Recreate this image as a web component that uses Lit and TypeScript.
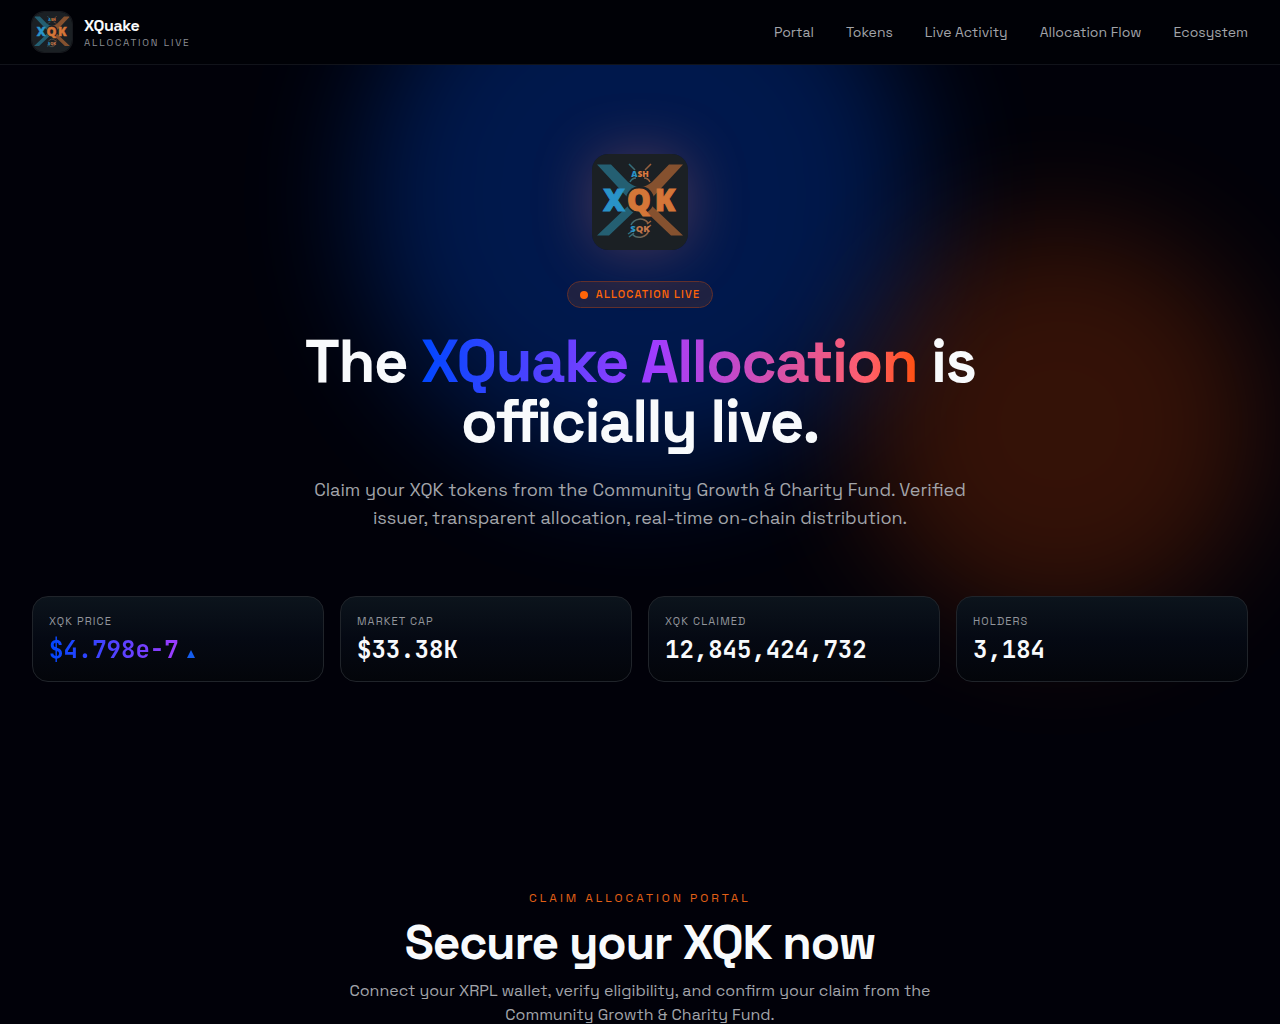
import { LitElement, html, svg, css } from "lit";
import { customElement } from "lit/decorators.js";

const links = ["Portal", "Tokens", "Live Activity", "Allocation Flow", "Ecosystem"];

const stats = [
  { label: "XQK Price", value: "$4.798e-7", rising: true },
  { label: "Market Cap", value: "$33.38K", rising: false },
  { label: "XQK Claimed", value: "12,845,424,732", rising: false },
  { label: "Holders", value: "3,184", rising: false },
];

@customElement("xqk-mark")
class XqkMark extends LitElement {
  static styles = css`
    :host { display: block; overflow: hidden; }
    .art { display: block; width: 100%; height: 100%; }
    .word { font-family: "Open Sans", Inter, sans-serif; font-weight: 800; }
  `;
  render() {
    return html`<svg class="art" viewBox="0 0 96 96" role="img" aria-label="XQuake">
      ${svg`
      <defs>
        <linearGradient id="ring" x1="0" x2="1">
          <stop offset="0" stop-color="#256f83" /><stop offset="1" stop-color="#a75e34" />
        </linearGradient>
      </defs>
      <rect width="96" height="96" fill="#1b2024" />
      <path d="M5 10.500H19L36 28Q42 33 48 33V52L17 81.500H5L36 52Q40 48 36 44Z" fill="#245f72" />
      <path d="M91 10.500H77L60 28Q54 33 48 33V52L79 81.500H91L60 52Q56 48 60 44Z" fill="#85512f" />
      <circle cx="48" cy="46" r="14" fill="#1b2024" />
      <path d="M37 10L43 16M59 10L53 16M38 28Q40 24 44 24M58 28Q56 24 52 24" fill="none" stroke="url(#ring)" stroke-width="1.500" />
      <path d="M39 71A10 10 0 0 1 56 69M40 80A10 10 0 0 0 57 76M36 80L42 76M37 83L42 79M55 70L59 67M55 74L59 71" fill="none" stroke="url(#ring)" stroke-width="1.500" />
      <g class="word" text-anchor="middle">
        <text x="48" y="22.500" font-size="8.500"><tspan fill="#2993c8">A</tspan><tspan fill="#db7a3f">SH</tspan></text>
        <text x="22" y="57" font-size="30" fill="#2993c8" stroke="#2993c8">X</text>
        <text x="47" y="57" font-size="30" fill="#d47638" stroke="#d47638">Q</text>
        <text x="73" y="57" font-size="30" fill="#d47638" stroke="#d47638">K</text>
        <text x="48" y="78" font-size="9.500"><tspan fill="#2993c8">S</tspan><tspan fill="#c4764a">QK</tspan></text>
      </g>`}
    </svg>`;
  }
}

@customElement("app-root")
class AppRoot extends LitElement {
  static styles = css`
    :host {
      display: block;
      position: relative;
      overflow: hidden;
      min-height: 100vh;
      background: #010109;
      color: #f8fafc;
      font-family: "Space Grotesk", Inter, sans-serif;
    }
    .header {
      position: relative;
      z-index: 2;
      display: flex;
      align-items: center;
      justify-content: space-between;
      height: 64px;
      padding: 0 32px;
      background: #000106;
      border-bottom: 1px solid #11131a;
    }
    .brand { display: flex; align-items: center; gap: 12px; color: inherit; text-decoration: none; }
    .brand-mark { width: 40px; height: 40px; border-radius: 12px; box-shadow: 0 0 0 1px #17191e; }
    .brand-text { display: flex; flex-direction: column; padding-top: 2px; }
    .brand-name { font-size: 16px; line-height: 18px; font-weight: 600; letter-spacing: -0.025em; }
    .brand-sub { font-size: 10px; line-height: 15px; letter-spacing: 0.18em; color: #8a8c92; text-transform: uppercase; }
    .nav { display: flex; gap: 32px; }
    .link { font-size: 14px; line-height: 20px; color: #a2a4a9; text-decoration: none; }
    .hero {
      position: relative;
      display: flex;
      flex-direction: column;
      align-items: center;
      padding: 89px 32px 96px;
      text-align: center;
    }
    .glow { position: absolute; border-radius: 50%; pointer-events: none; }
    .glow-blue { width: 560px; height: 560px; top: -150px; left: calc(50% - 280px); background: #0058ff; opacity: .27; filter: blur(60px); }
    .glow-orange { width: 400px; height: 400px; top: 160px; right: 20px; background: #ff5500; opacity: .2; filter: blur(60px); }
    .hero-mark {
      position: relative;
      width: 96px;
      height: 96px;
      border-radius: 16px;
      box-shadow: 0 0 60px rgba(255, 130, 110, .3);
    }
    .badge {
      position: relative;
      display: flex;
      align-items: center;
      gap: 8px;
      margin-top: 31px;
      padding: 5px 12px;
      border: 1px solid #61302c;
      border-radius: 14px;
      background: rgba(255, 106, 0, .12);
      color: #ff6508;
      font-size: 11px;
      line-height: 15px;
      font-weight: 500;
      letter-spacing: 0.1em;
      text-transform: uppercase;
    }
    .dot { width: 8px; height: 8px; border-radius: 50%; background: #ff6508; }
    .title {
      position: relative;
      max-width: 768px;
      margin: 24px 0 0;
      font-size: 60px;
      line-height: 60px;
      font-weight: 700;
      letter-spacing: -0.025em;
    }
    .gradient {
      background: linear-gradient(90deg, #0047ff 0%, #a03cff 47%, #ff5f6b 90%, #ff5010 100%);
      background-clip: text;
      -webkit-background-clip: text;
      color: transparent;
    }
    .lead {
      position: relative;
      max-width: 672px;
      margin: 24px 0 0;
      font-size: 18px;
      line-height: 28px;
      color: #a2a4a9;
    }
    .stats {
      position: relative;
      display: grid;
      grid-template-columns: repeat(4, 1fr);
      gap: 16px;
      align-self: stretch;
      margin: 64px 0 0;
      text-align: left;
    }
    .card {
      padding: 16px;
      border: 1px solid #20242a;
      border-radius: 16px;
      background: linear-gradient(180deg, #0c141c 0%, #050913 50%, #03050a 100%);
    }
    .label { font-size: 11px; line-height: 16px; letter-spacing: 0.1em; color: #92959b; text-transform: uppercase; }
    .value {
      display: flex;
      align-items: baseline;
      gap: 8px;
      margin: 6px 0 0;
      font-family: "JetBrains Mono", "Liberation Mono", monospace;
      font-size: 24px;
      line-height: 30px;
      font-weight: 700;
    }
    .price { background: linear-gradient(90deg, #0047ff, #a03cff); background-clip: text; -webkit-background-clip: text; color: transparent; }
    .up { width: 8px; height: 8px; fill: #155eef; }
    .portal {
      position: relative;
      display: flex;
      flex-direction: column;
      align-items: center;
      padding: 112px 32px 0;
      text-align: center;
    }
    .eyebrow { margin: 0; font-size: 12px; line-height: 16px; letter-spacing: 3px; color: #e26016; text-transform: uppercase; }
    .heading { margin: 13px 0 0; font-size: 48px; line-height: 48px; font-weight: 700; letter-spacing: -0.025em; }
    .copy { max-width: 620px; margin: 12px 0 0; font-size: 16px; line-height: 24px; color: #a2a4a9; }
  `;

  render() {
    return html`
      <header class="header">
        <a class="brand" href="#top">
          <xqk-mark class="brand-mark"></xqk-mark>
          <span class="brand-text">
            <span class="brand-name">XQuake</span>
            <span class="brand-sub">Allocation Live</span>
          </span>
        </a>
        <nav class="nav" aria-label="Main">
          ${links.map((text) => html`<a class="link" href="#${text.toLowerCase().replace(" ", "-")}">${text}</a>`)}
        </nav>
      </header>
      <main>
        <section class="hero" id="top">
          <div class="glow glow-blue"></div>
          <div class="glow glow-orange"></div>
          <xqk-mark class="hero-mark"></xqk-mark>
          <div class="badge"><span class="dot"></span>Allocation Live</div>
          <h1 class="title">The <span class="gradient">XQuake Allocation</span> is<br />officially live.</h1>
          <p class="lead">Claim your XQK tokens from the Community Growth &amp; Charity Fund. Verified<br />issuer, transparent allocation, real-time on-chain distribution.</p>
          <dl class="stats">
            ${stats.map((s) => html`
              <div class="card">
                <dt class="label">${s.label}</dt>
                <dd class="value">
                  <span class=${s.rising ? "price" : ""}>${s.value}</span>
                  ${s.rising ? html`<svg class="up" viewBox="0 0 8 8" aria-hidden="true"><path d="M4 0L8 8H0Z" /></svg>` : ""}
                </dd>
              </div>`)}
          </dl>
        </section>
        <section class="portal" id="portal">
          <p class="eyebrow">Claim Allocation Portal</p>
          <h2 class="heading">Secure your XQK now</h2>
          <p class="copy">Connect your XRPL wallet, verify eligibility, and confirm your claim from the<br />Community Growth &amp; Charity Fund.</p>
        </section>
      </main>
    `;
  }
}
